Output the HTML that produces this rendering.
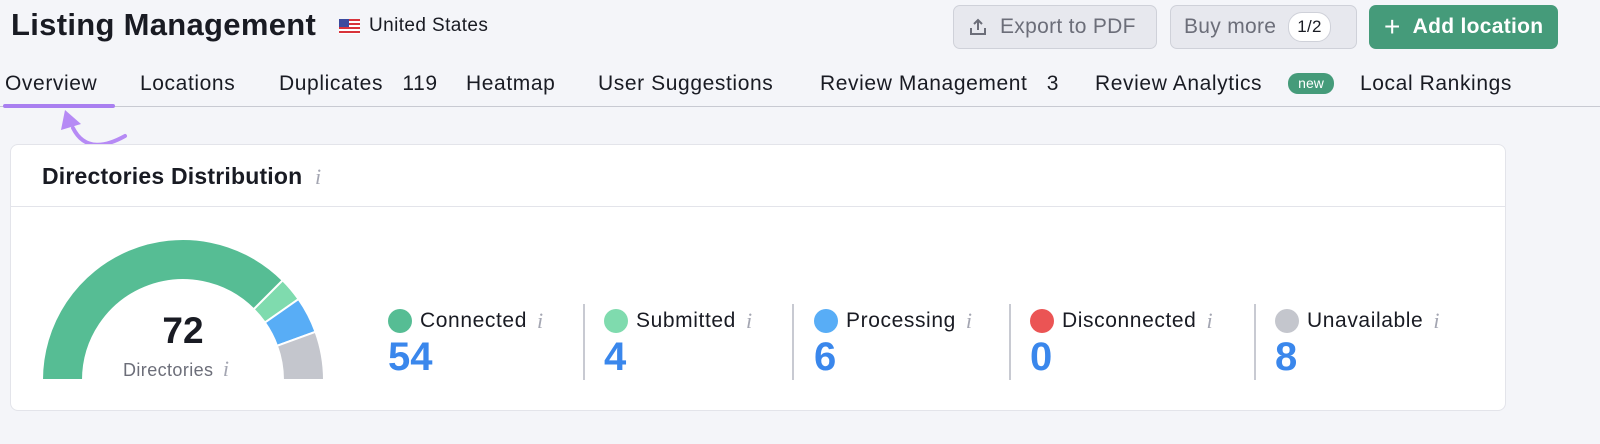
<!DOCTYPE html>
<html><head><meta charset="utf-8"><style>
*{margin:0;padding:0;box-sizing:border-box}
body{width:1600px;height:444px;background:#f4f5f9;font-family:"Liberation Sans",sans-serif;color:#191b23;position:relative;overflow:hidden}
.abs{position:absolute;white-space:nowrap}
.btn{position:absolute;top:5px;height:44px;border-radius:7px;font-size:21px;display:flex;align-items:center;letter-spacing:.3px}
.tab{position:absolute;top:72px;font-size:21px;color:#191b23;letter-spacing:.6px}
.card{position:absolute;left:10px;top:144px;width:1496px;height:267px;background:#fff;border-radius:8px;border:1px solid #e3e4ea}
.info{font-family:"Liberation Serif",serif;font-style:italic;color:#a4a6b2;font-size:22px}
.leg{position:absolute;top:308px}
.leg .l{font-size:21px;display:flex;align-items:center;letter-spacing:.6px}
.leg .dot{width:24px;height:24px;border-radius:50%;margin-right:8px}
.leg .n{font-size:40px;font-weight:bold;color:#3a87ec;margin-top:1px}
.sep{position:absolute;top:304px;width:2px;height:76px;background:#c8cad2}
</style></head><body>
<div class="abs" style="left:11px;top:7px;font-size:31px;font-weight:bold;letter-spacing:.3px">Listing Management</div>
<div class="abs" style="left:339px;top:19px;width:21px;height:15px;background:repeating-linear-gradient(#d8333b 0 2px,#fff 2px 4px)"><div style="width:10px;height:8px;background:#3b4a9e"></div></div>
<div class="abs" style="left:369px;top:15px;font-size:19px;letter-spacing:.4px">United States</div>
<div class="btn" style="left:953px;width:204px;background:#e7e8ee;border:1px solid #cfd1d9;color:#6c6e79;padding-left:14px">
<svg width="20" height="20" viewBox="0 0 20 20" style="margin-right:12px"><path d="M10 13V3M6 7l4-4 4 4M3 11v6h14v-6" fill="none" stroke="#6c6e79" stroke-width="2"/></svg>Export to PDF</div>
<div class="btn" style="left:1170px;width:187px;background:#e7e8ee;border:1px solid #cfd1d9;color:#6c6e79;padding-left:13px">Buy more<span style="margin-left:12px;background:#fff;border:1px solid #cfd1d9;border-radius:14px;font-size:17px;padding:4px 8px;color:#191b23">1/2</span></div>
<div class="btn" style="left:1369px;width:189px;background:#459b7a;color:#fff;font-weight:bold;padding-left:15px"><span style="font-size:28px;margin-right:12px;font-weight:normal">+</span>Add location</div>
<div class="tab" style="left:5px">Overview</div>
<div class="tab" style="left:140px">Locations</div>
<div class="tab" style="left:279px">Duplicates&nbsp;&nbsp;&nbsp;119</div>
<div class="tab" style="left:466px">Heatmap</div>
<div class="tab" style="left:598px">User Suggestions</div>
<div class="tab" style="left:820px">Review Management&nbsp;&nbsp;&nbsp;3</div>
<div class="tab" style="left:1095px">Review Analytics</div>
<div class="abs" style="left:1288px;top:73px;width:46px;height:21px;border-radius:10px;background:#459b7a;color:#fff;font-size:14px;text-align:center;line-height:20px">new</div>
<div class="tab" style="left:1360px">Local Rankings</div>
<div class="abs" style="left:0;top:106px;width:1600px;height:1px;background:#c8cad2"></div>
<div class="abs" style="left:3px;top:104px;width:112px;height:4px;border-radius:2px;background:#a97ff0"></div>
<svg class="abs" style="left:45px;top:106px" width="90" height="50"><path d="M80 30C62 40 40 46 28 22" fill="none" stroke="#b68af5" stroke-width="4" stroke-linecap="round"/><path d="M16 24L20 4 36 18Z" fill="#b68af5"/></svg>
<div class="card">
<div class="abs" style="left:31px;top:18px;font-size:23px;font-weight:bold;letter-spacing:.2px">Directories Distribution <span class="info" style="font-weight:normal;margin-left:6px">i</span></div>
<div class="abs" style="left:0;top:61px;width:1494px;height:1px;background:#e3e4ea"></div>
</div>
<svg class="abs" style="left:0;top:0" width="400" height="444">
<g stroke="#fff" stroke-width="2">
<path d="M42 380A141 141 0 0 1 282.7 280.3L253.7 309.3A100 100 0 0 0 83 380Z" fill="#56bd94"/>
<path d="M282.7 280.3A141 141 0 0 1 298.5 299.1L264.9 322.6A100 100 0 0 0 253.7 309.3Z" fill="#7fdbae"/>
<path d="M298.5 299.1A141 141 0 0 1 315.5 331.8L277 345.8A100 100 0 0 0 264.9 322.6Z" fill="#58adf6"/>
<path d="M315.5 331.8A141 141 0 0 1 324 380L283 380A100 100 0 0 0 277 345.8Z" fill="#c4c6cd"/>
</g></svg>
<div class="abs" style="left:183px;top:310px;transform:translateX(-50%);font-size:37px;font-weight:bold">72</div>
<div class="abs" style="left:123px;top:356px;font-size:18px;color:#6c6e79;letter-spacing:.4px">Directories <span class="info" style="margin-left:4px">i</span></div>
<div class="leg" style="left:388px"><div class="l"><span class="dot" style="background:#56bd94"></span>Connected <span class="info" style="margin-left:10px">i</span></div><div class="n">54</div></div>
<div class="sep" style="left:583px"></div>
<div class="leg" style="left:604px"><div class="l"><span class="dot" style="background:#7fdbae"></span>Submitted <span class="info" style="margin-left:10px">i</span></div><div class="n">4</div></div>
<div class="sep" style="left:792px"></div>
<div class="leg" style="left:814px"><div class="l"><span class="dot" style="background:#58adf6"></span>Processing <span class="info" style="margin-left:10px">i</span></div><div class="n">6</div></div>
<div class="sep" style="left:1009px"></div>
<div class="leg" style="left:1030px"><div class="l"><span class="dot" style="background:#eb5454"></span>Disconnected <span class="info" style="margin-left:10px">i</span></div><div class="n">0</div></div>
<div class="sep" style="left:1254px"></div>
<div class="leg" style="left:1275px"><div class="l"><span class="dot" style="background:#c4c6cd"></span>Unavailable <span class="info" style="margin-left:10px">i</span></div><div class="n">8</div></div>
</body></html>
